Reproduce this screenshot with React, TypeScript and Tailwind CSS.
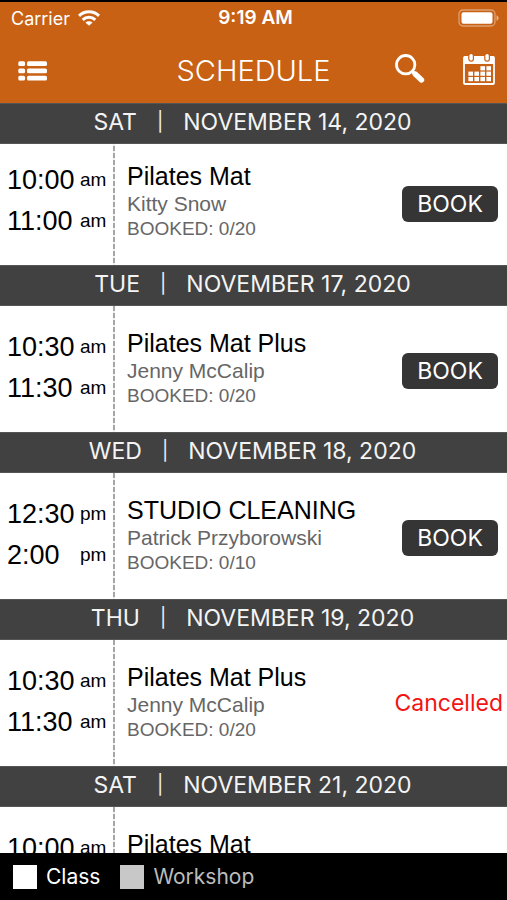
type Session = {
  weekday: string;
  date: string;
  start: [string, string];
  end: [string, string];
  title: string;
  teacher: string;
  booked: string;
  cancelled?: boolean;
};

const sessions: Session[] = [
  { weekday: "SAT", date: "NOVEMBER 14, 2020", start: ["10:00", "am"], end: ["11:00", "am"], title: "Pilates Mat", teacher: "Kitty Snow", booked: "0/20" },
  { weekday: "TUE", date: "NOVEMBER 17, 2020", start: ["10:30", "am"], end: ["11:30", "am"], title: "Pilates Mat Plus", teacher: "Jenny McCalip", booked: "0/20" },
  { weekday: "WED", date: "NOVEMBER 18, 2020", start: ["12:30", "pm"], end: ["2:00", "pm"], title: "STUDIO CLEANING", teacher: "Patrick Przyborowski", booked: "0/10" },
  { weekday: "THU", date: "NOVEMBER 19, 2020", start: ["10:30", "am"], end: ["11:30", "am"], title: "Pilates Mat Plus", teacher: "Jenny McCalip", booked: "0/20", cancelled: true },
  { weekday: "SAT", date: "NOVEMBER 21, 2020", start: ["10:00", "am"], end: ["11:00", "am"], title: "Pilates Mat", teacher: "Kitty Snow", booked: "0/20" },
];

function WifiIcon() {
  return (
    <svg viewBox="0 0 22 16" className="h-4 w-[22px]" fill="none" stroke="currentColor" strokeWidth="3" aria-hidden="true">
      <path d="M1 5.800C6.600 .4 15.400 .4 21 5.800" />
      <path d="M4.700 9.800C8.200 6.400 13.800 6.400 17.300 9.800" />
      <path d="M11 15.800L7.400 12.400C9.400 10.700 12.600 10.700 14.600 12.400Z" fill="currentColor" stroke="none" />
    </svg>
  );
}

function BatteryIcon() {
  return (
    <svg viewBox="0 0 42 18" className="h-[18px] w-[42px]" aria-label="Battery full" role="img">
      <rect x="1" y="1" width="36" height="16" rx="4" fill="none" stroke="#fff" strokeOpacity=".4" strokeWidth="1.300" />
      <rect x="3.500" y="3.300" width="31" height="11.500" rx="2" fill="#fff" />
      <path d="M38.500 6.200C41.300 7.200 41.300 10.800 38.500 11.800Z" fill="#fff" fillOpacity=".5" />
    </svg>
  );
}

function ListIcon() {
  return (
    <svg viewBox="0 0 29 20" className="h-5 w-[29px]" fill="currentColor" aria-hidden="true">
      {[0.2, 7.5, 14.8].map((y) => (
        <g key={y}>
          <rect x="0.300" y={y} width="6.800" height="4.800" rx="1.600" />
          <rect x="9" y={y} width="20" height="4.800" rx="1.600" />
        </g>
      ))}
    </svg>
  );
}

function SearchIcon() {
  return (
    <svg viewBox="0 0 30 30" className="size-[30px]" fill="none" stroke="currentColor" aria-hidden="true">
      <circle cx="10.700" cy="10.700" r="9.200" strokeWidth="2.800" />
      <path d="M17 17L21 21" strokeWidth="3.400" />
      <path d="M20.200 20L26.500 26" strokeWidth="5.400" strokeLinecap="round" />
    </svg>
  );
}

const calendarCells = [
  [17.4, 13.2], [23.4, 13.2],
  [5.4, 18.6], [11.4, 18.6], [17.4, 18.6], [23.4, 18.6],
  [5.4, 24], [11.4, 24], [17.4, 24], [23.4, 24],
];

function CalendarIcon() {
  return (
    <svg viewBox="0 0 32 32" className="size-8" fill="none" aria-hidden="true">
      <rect x="1" y="4" width="30" height="27" rx="1" stroke="#fff" strokeWidth="1.800" />
      <rect x="1" y="3.400" width="30" height="7.600" fill="#fff" />
      {[5.8, 21.8].map((x) => (
        <rect key={x} x={x} y=".4" width="4.600" height="7.800" rx="2.200" fill="#fff" stroke="#c86114" strokeWidth="1.200" />
      ))}
      {calendarCells.map(([x, y]) => (
        <rect key={`${x}-${y}`} x={x} y={y} width="4.600" height="4.200" fill="#fff" />
      ))}
    </svg>
  );
}

function Time({ value }: { value: [string, string] }) {
  return (
    <div className="flex h-[41px] items-center justify-between">
      <span className="text-[27px] leading-8">{value[0]}</span>
      <span className="w-[26px] text-[19px] leading-6">{value[1]}</span>
    </div>
  );
}

export default function App() {
  return (
    <div className="flex h-screen flex-col overflow-hidden border-t-2 border-black bg-white font-['Inter',sans-serif]">
      <header className="shrink-0 bg-[#c86114] text-white">
        <div className="grid h-8 grid-cols-3 items-center pr-[7px] pl-[11px] text-[18px]">
          <div className="flex items-center gap-2">
            <span>Carrier</span>
            <WifiIcon />
          </div>
          <span className="text-center text-[19px] font-semibold whitespace-nowrap">9:19 AM</span>
          <div className="flex justify-end">
            <BatteryIcon />
          </div>
        </div>
        <nav className="grid h-[69px] grid-cols-[1fr_auto_1fr] items-center px-3 pt-[5px]">
          <button type="button" aria-label="Menu" className="justify-self-start px-1.5">
            <ListIcon />
          </button>
          <h1 className="text-[29px] leading-9 font-light">SCHEDULE</h1>
          <div className="flex items-center justify-end gap-[38px] pb-[5px]">
            <button type="button" aria-label="Search">
              <SearchIcon />
            </button>
            <button type="button" aria-label="Calendar">
              <CalendarIcon />
            </button>
          </div>
        </nav>
      </header>

      <main className="min-h-0 flex-1 overflow-y-auto [scrollbar-width:none]">
        {sessions.map((s) => (
          <section key={s.date} className="group">
            <h2 className="relative flex h-[41px] items-center justify-center gap-5 border-y border-[#555] bg-[#414141] pr-[2px] pb-[3px] text-[23px] leading-8 text-[#f4f4f4]">
              <span>{s.weekday}</span>
              <span className="text-[19px]">|</span>
              <span>{s.date}</span>
            </h2>
            <div className="flex h-[126px] font-['Liberation_Sans',Arial,sans-serif] text-black group-first:-mt-[5px]">
              <div className="w-[113px] shrink-0 pt-5 pr-[7px] pl-[7px]">
                <Time value={s.start} />
                <Time value={s.end} />
              </div>
              <div
                className="w-[2px] shrink-0 bg-[repeating-linear-gradient(to_bottom,#a6a6a6_0_5px,#f0f0f0_5px_7px)]"
                aria-hidden="true"
              />
              <div className="min-w-0 flex-1 pt-[22px] pl-3 whitespace-nowrap">
                <h3 className="text-[25px] leading-[30px]">{s.title}</h3>
                <p className="text-[21px] leading-[25px] text-[#666]">{s.teacher}</p>
                <p className="text-[19px] leading-[25px] text-[#666]">BOOKED: {s.booked}</p>
              </div>
              <div className="flex shrink-0 items-center font-['Inter',sans-serif] text-[23px]">
                {s.cancelled ? (
                  <span className="pr-1 leading-7 text-[#f21313]">Cancelled</span>
                ) : (
                  <button type="button" className="mt-1 mr-[9px] h-9 w-24 rounded-md bg-[#353535] text-white">
                    BOOK
                  </button>
                )}
              </div>
            </div>
          </section>
        ))}
      </main>

      <footer className="flex h-[47px] shrink-0 items-center gap-5 bg-black pl-[13px] text-[21px]">
        <div className="flex items-center gap-[9px] text-white">
          <span className="size-6 bg-white" />
          Class
        </div>
        <div className="flex items-center gap-[9px] text-[#bcbcbc]">
          <span className="size-6 bg-[#c8c8c8]" />
          Workshop
        </div>
      </footer>
    </div>
  );
}
